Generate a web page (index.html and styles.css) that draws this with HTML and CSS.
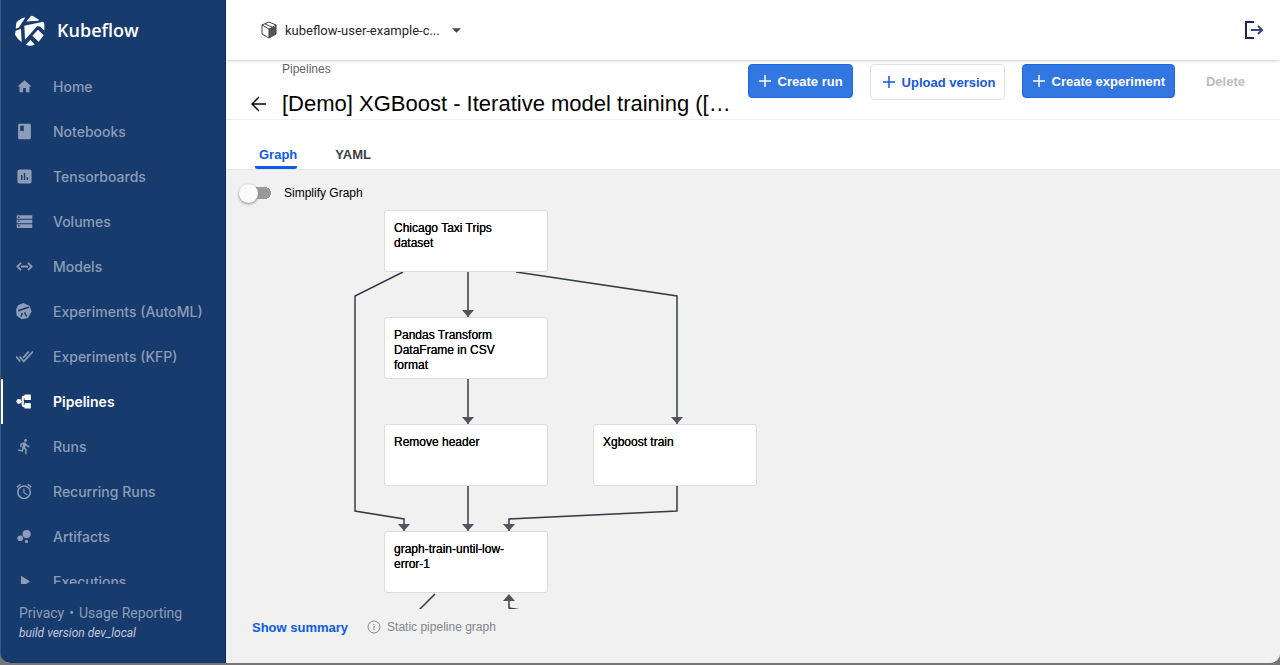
FILE: index.html
```html
<!DOCTYPE html>
<html lang="en">
<head>
<meta charset="utf-8">
<title>Kubeflow Pipelines</title>
<link rel="stylesheet" href="styles.css">
</head>
<body>
<div class="app">
  <aside class="sidebar">
    <a class="brand" href="#">
      <svg class="brand-logo" viewBox="46 43 90 92" aria-hidden="true">
        <path d="M48 83 50 66Q60 52 77 50L57 81ZM80 62 93 46Q97 43 102 47L118 57 116 60ZM74 75 130 63Q133 64 134 70V89L121 77 112 76 90 101 76 117ZM115 87 132 103 117 123 98 105ZM48 90 64 84 66 124Q54 116 46 102ZM92 117 105 131Q92 138 79 132Z"/>
      </svg>
      <span>Kubeflow</span>
    </a>
    <nav class="nav">
      <a class="nav-item" href="#"><svg viewBox="0 0 24 24"><path d="M10 20v-6h4v6h5v-8h3L12 3 2 12h3v8z"/></svg><span>Home</span></a>
      <a class="nav-item" href="#"><svg viewBox="0 0 24 24"><path d="M19 1H5c-1.100 0-2 .9-2 2v18c0 1.100.9 2 2 2h14c1.100 0 2-.9 2-2V3c0-1.100-.9-2-2-2zM6 4h5v8l-2.500-1.500L6 12V4z"/></svg><span>Notebooks</span></a>
      <a class="nav-item" href="#"><svg viewBox="0 0 24 24"><path d="M19 2H5a3 3 0 0 0-3 3v14a3 3 0 0 0 3 3h14a3 3 0 0 0 3-3V5a3 3 0 0 0-3-3zM9 17H7v-7h2v7zm4 0h-2V7h2v10zm4 0h-2v-4h2v4z"/></svg><span>Tensorboards</span></a>
      <a class="nav-item" href="#"><svg viewBox="0 0 24 24"><path d="M1 21h22v-5H1v5zm2-4h2v2H3v-2zM1 3v5h22V3H1zm4 4H3V5h2v2zM1 14.500h22v-5H1v5zm2-4h2v2H3v-2z"/></svg><span>Volumes</span></a>
      <a class="nav-item" href="#"><svg viewBox="0 0 24 24"><path class="nav-stroke" d="M7 7 2 12 7 17M17 7 22 12 17 17M7 12H17"/></svg><span>Models</span></a>
      <a class="nav-item" href="#"><svg viewBox="0 0 24 24"><path d="M10 0 19 4 22 12 17 21 8 23 1 18 0 9 3 3Z"/><path class="nav-cut" d="M3 11 18 6M9 14 7 19M12 13 15 19"/></svg><span>Experiments (AutoML)</span></a>
      <a class="nav-item" href="#"><svg viewBox="0 0 24 24"><path class="nav-stroke" d="M0 12 6 19M5 12 11 19 24 5M10 14 18 5"/></svg><span>Experiments (KFP)</span></a>
      <a class="nav-item nav-item-active" href="#" aria-current="page"><svg viewBox="0 0 24 24"><circle cx="4" cy="12" r="3.500"/><rect x="12" y="2" width="9" height="8" rx="1"/><rect x="12" y="14" width="9" height="8" rx="1"/><path d="M4 11h4V7q0-3 3-3h3v3h-3v10h3v3h-3q-3 0-3-3v-4H4z"/></svg><span>Pipelines</span></a>
      <a class="nav-item" href="#"><svg viewBox="0 0 24 24"><path d="M13.490 5.480c1.100 0 2-.9 2-2s-.9-2-2-2-2 .9-2 2 .9 2 2 2zm-3.600 13.900l1-4.400 2.100 2v6h2v-7.500l-2.100-2 .6-3c1.300 1.500 3.300 2.500 5.500 2.500v-2c-1.900 0-3.500-1-4.300-2.400l-1-1.600c-.4-.6-1-1-1.700-1-.3 0-.5.1-.8.1l-5.200 2.200v4.700h2v-3.400l1.800-.7-1.600 8.100-4.900-1-.4 2 7 1.400z"/></svg><span>Runs</span></a>
      <a class="nav-item" href="#"><svg viewBox="2 1 21 22"><path d="M22 5.720l-4.600-3.860-1.290 1.530 4.600 3.860L22 5.720zM7.880 3.390L6.600 1.860 2 5.710l1.290 1.530 4.590-3.850zM12.500 8H11v6l4.750 2.850.75-1.230-4-2.370V8zM12 4c-4.970 0-9 4.030-9 9s4.020 9 9 9a9 9 0 0 0 0-18zm0 16c-3.870 0-7-3.130-7-7s3.130-7 7-7 7 3.130 7 7-3.130 7-7 7z"/></svg><span>Recurring Runs</span></a>
      <a class="nav-item" href="#"><svg viewBox="0 0 24 24"><circle cx="6" cy="14.500" r="4"/><circle cx="14.800" cy="19" r="2.300"/><circle cx="15" cy="8.500" r="5.800"/></svg><span>Artifacts</span></a>
      <a class="nav-item" href="#"><svg viewBox="0 0 24 24"><path d="M7 4v16l13-8z"/></svg><span>Executions</span></a>
    </nav>
    <footer class="side-footer">
      <div class="side-links"><a href="#">Privacy</a><span>•</span><a href="#">Usage Reporting</a></div>
      <div class="build">build version dev_local</div>
    </footer>
  </aside>

  <main class="main">
    <header class="topbar">
      <label class="namespace">
        <svg class="cube" viewBox="0 0 18 18" aria-hidden="true"><path class="cube-side" d="M9 8 16 5V13L9 17Z"/><path class="cube-line" d="M9 1 16 4V13L9 17 2 13V4ZM2 4 9 8 16 4M9 8V17M5 3 12 6V9"/></svg>
        <select aria-label="Namespace"><option>kubeflow-user-example-c...</option></select>
        <svg class="caret" viewBox="0 0 10 5" aria-hidden="true"><path d="M0 0H10L5 5Z"/></svg>
      </label>
      <button class="icon-button" aria-label="Log out"><svg class="logout" viewBox="0 0 20 18"><path d="M10 1H2V17H10"/><path class="logout-arrow" d="M7 9H18M14 5 18 9 14 13"/></svg></button>
    </header>

    <section class="page-header">
      <div class="heading">
        <a class="crumb" href="#">Pipelines</a>
        <div class="title-row">
          <button class="icon-button" aria-label="Back"><svg class="back" viewBox="0 0 16 16"><path d="M15 8H1M8 1 1 8 8 15"/></svg></button>
          <h1>[Demo] XGBoost - Iterative model training ([…</h1>
        </div>
      </div>
      <div class="actions">
        <button class="btn btn-primary"><svg viewBox="0 0 12 12"><path d="M6 0V12M0 6H12"/></svg>Create run</button>
        <button class="btn btn-outline"><svg viewBox="0 0 12 12"><path d="M6 0V12M0 6H12"/></svg>Upload version</button>
        <button class="btn btn-primary"><svg viewBox="0 0 12 12"><path d="M6 0V12M0 6H12"/></svg>Create experiment</button>
        <button class="btn btn-text" disabled>Delete</button>
      </div>
    </section>

    <div class="tabs" role="tablist">
      <button class="tab tab-active" role="tab" aria-selected="true">Graph</button>
      <button class="tab" role="tab" aria-selected="false">YAML</button>
    </div>

    <section class="graph-page">
      <div class="canvas">
        <svg class="edges" width="560" height="440" aria-hidden="true">
          <defs><marker id="arrow" viewBox="0 0 12 7" refX="6" refY="7" markerWidth="12" markerHeight="7" markerUnits="userSpaceOnUse" orient="0"><path d="M0 0H12L6 7Z"/></marker></defs>
          <path d="M177 102 129 126V341L178 349V361" marker-end="url(#arrow)"/>
          <path d="M242 102V147" marker-end="url(#arrow)"/>
          <path d="M290 102 451 126V254" marker-end="url(#arrow)"/>
          <path d="M242 209V254" marker-end="url(#arrow)"/>
          <path d="M242 316V361" marker-end="url(#arrow)"/>
          <path d="M451 316V341L283 349V361" marker-end="url(#arrow)"/>
          <path d="M209 424 193 440M283 426V438L295 440"/>
          <path class="head" d="M277 431 283 424 289 431Z"/>
        </svg>
        <div class="node node-dataset">Chicago Taxi Trips dataset</div>
        <div class="node node-pandas">Pandas Transform DataFrame in CSV format</div>
        <div class="node node-remove">Remove header</div>
        <div class="node node-train">Xgboost train</div>
        <div class="node node-loop">graph-train-until-low-error-1</div>
        <label class="toggle"><input type="checkbox" role="switch">Simplify Graph</label>
      </div>
      <div class="graph-footer">
        <button class="summary">Show summary</button>
        <svg class="info" viewBox="0 0 14 14" aria-hidden="true"><circle cx="7" cy="7" r="6"/><path d="M7 6V10M7 4V5"/></svg>
        <span>Static pipeline graph</span>
      </div>
    </section>
  </main>
</div>
</body>
</html>
```
FILE: styles.css
```css
* { box-sizing: border-box; }

body {
  margin: 0;
  background: #777577;
  font-family: "Liberation Sans", Arial, sans-serif;
  font-size: 12px;
  color: #000;
}

a { color: inherit; text-decoration: none; }

button {
  font: inherit;
  color: inherit;
  padding: 0;
  border: 0;
  background: none;
}

svg { display: block; flex: none; }

.app {
  display: flex;
  height: calc(100vh - 2px);
  overflow: hidden;
  border-radius: 0 0 10px 10px;
  background: #fff;
}

/* Sidebar */
.sidebar {
  position: relative;
  z-index: 1;
  flex: none;
  display: flex;
  flex-direction: column;
  width: 226px;
  background: #183b6d;
  border-left: 1px solid #3d5883;
  border-right: 1px solid #0a2468;
  color: #8c9db7;
}

.brand {
  display: flex;
  align-items: center;
  gap: 12px;
  height: 64px;
  padding: 0 0 4px 14px;
  color: #fff;
  font-family: "Open Sans", sans-serif;
  font-size: 18px;
  font-weight: 600;
}

.brand-logo { width: 30px; height: 31px; fill: #fff; }

.nav {
  flex: 1;
  min-height: 0;
  overflow: hidden;
  font-family: Inter, sans-serif;
  font-size: 14px;
  font-weight: 500;
}

.nav-item {
  display: flex;
  align-items: center;
  gap: 20px;
  height: 45px;
  padding-left: 15px;
}

.nav-item svg { width: 17px; height: 17px; fill: currentColor; }
.nav-item .nav-cut { fill: none; stroke: #183b6d; stroke-width: 2; }
.nav-item .nav-stroke { fill: none; stroke: currentColor; stroke-width: 2.5; }

.nav-item-active {
  margin-left: -1px;
  padding-left: 13px;
  border-left: 3px solid #fff;
  color: #fff;
  font-weight: 600;
}

.side-footer {
  flex: none;
  height: 79px;
  padding: 19px 0 0 18px;
  font-family: Roboto, sans-serif;
  font-size: 14px;
  line-height: 20px;
}

.side-links { display: flex; gap: 5px; }
.build { color: #c0cadb; font-size: 12px; font-style: italic; }

/* Top bar */
.main {
  flex: 1;
  min-width: 0;
  display: flex;
  flex-direction: column;
}

.topbar {
  flex: none;
  display: flex;
  align-items: center;
  justify-content: space-between;
  height: 60px;
  padding: 0 16px 0 34px;
  box-shadow: 0 1px 3px #ccd0d4;
}

.namespace { display: flex; align-items: center; gap: 7px; }

.namespace select {
  appearance: none;
  width: 160px;
  padding: 0;
  border: 0;
  background: none;
  color: #26282b;
  font-family: Roboto, sans-serif;
  font-size: 13px;
}

.cube { width: 18px; height: 18px; }
.cube-line { fill: none; stroke: #444; }
.cube-side { fill: #555; }
.caret { width: 9px; height: 5px; fill: #444; }
.logout { width: 20px; height: 18px; fill: none; stroke: #1b2558; stroke-width: 2; }
.logout-arrow { stroke: #35467c; }

/* Page header */
.page-header {
  flex: none;
  display: flex;
  justify-content: space-between;
  height: 60px;
  padding: 3px 34px 0 25px;
  border-bottom: 1px solid #eceeef;
}

.heading { min-width: 0; }

.crumb {
  display: block;
  padding-left: 31px;
  color: #5f6368;
  line-height: 12px;
}

.title-row { display: flex; align-items: center; gap: 15px; margin-top: 14px; }
.back { width: 16px; height: 16px; fill: none; stroke: #000; stroke-width: 1.5; }

h1 {
  margin: 0;
  overflow: hidden;
  font-size: 22px;
  font-weight: 400;
  line-height: 30px;
  white-space: nowrap;
  text-overflow: ellipsis;
}

.actions {
  flex: none;
  display: flex;
  align-items: flex-start;
  gap: 17px;
  padding-top: 1px;
}

.btn {
  display: flex;
  align-items: center;
  gap: 7px;
  height: 34px;
  padding: 0 9px 0 10px;
  border: 1px solid transparent;
  border-radius: 4px;
  font-size: 13px;
  font-weight: 700;
}

.btn svg { width: 12px; height: 12px; stroke: currentColor; stroke-width: 1.5; }
.btn-primary { background: #3276e1; border-color: #1f68df; color: #fff; }
.btn-outline { height: 36px; padding: 0 8px 0 12px; border-color: #e0e1e3; background: #fff; color: #1558e0; }
.btn-text { padding: 0 0 0 13px; color: #bdbdbd; }

/* Tabs */
.tabs {
  flex: none;
  display: flex;
  align-items: flex-end;
  gap: 34px;
  height: 49px;
  padding-left: 29px;
}

.tab {
  padding: 0 0 1px 4px;
  border-bottom: 3px solid transparent;
  border-radius: 2px;
  color: #3c4043;
  font-size: 13px;
  font-weight: 700;
  line-height: 20px;
}

.tab-active { border-color: #0d5be5; color: #0d5be5; }

/* Graph */
.graph-page {
  flex: 1;
  min-height: 0;
  display: flex;
  flex-direction: column;
  background: #f1f1f1;
  border-top: 1px solid #e6e6e6;
}

.canvas { position: relative; flex: 1; min-height: 0; overflow: hidden; }

.toggle {
  display: flex;
  align-items: center;
  gap: 13px;
  width: max-content;
  padding: 13px 0 0 13px;
}

.toggle input {
  appearance: none;
  display: flex;
  align-items: center;
  width: 32px;
  height: 20px;
  margin: 0;
  background: linear-gradient(#999, #999) 8px 4px / 18px 12px no-repeat, radial-gradient(circle at 26px 10px, #999 6px, transparent 6px);
}

.toggle input::before {
  content: "";
  width: 19px;
  height: 19px;
  border-radius: 50%;
  background: #fafafa;
  box-shadow: 0 1px 3px #888;
}

.edges { position: absolute; left: 0; top: 0; fill: none; stroke: #343c48; stroke-width: 1.5; }
.edges marker path, .edges .head { fill: #50555b; stroke: none; }

.node {
  position: absolute;
  width: 164px;
  height: 62px;
  padding: 10px 30px 0 9px;
  border: 1px solid #dcdcdc;
  border-radius: 3px;
  background: #fff;
  line-height: 15px;
  text-shadow: 0 0 #000;
}

.node-dataset { left: 158px; top: 40px; }
.node-pandas { left: 158px; top: 147px; }
.node-remove { left: 158px; top: 254px; }
.node-train { left: 367px; top: 254px; }
.node-loop { left: 158px; top: 361px; }

.graph-footer {
  flex: none;
  display: flex;
  align-items: center;
  height: 54px;
  padding: 0 0 18px 26px;
  color: #80868b;
}

.summary { margin-right: 19px; color: #0d5be5; font-size: 13px; font-weight: 700; }
.info { width: 14px; height: 14px; margin-right: 6px; fill: none; stroke: #80868b; }
```
